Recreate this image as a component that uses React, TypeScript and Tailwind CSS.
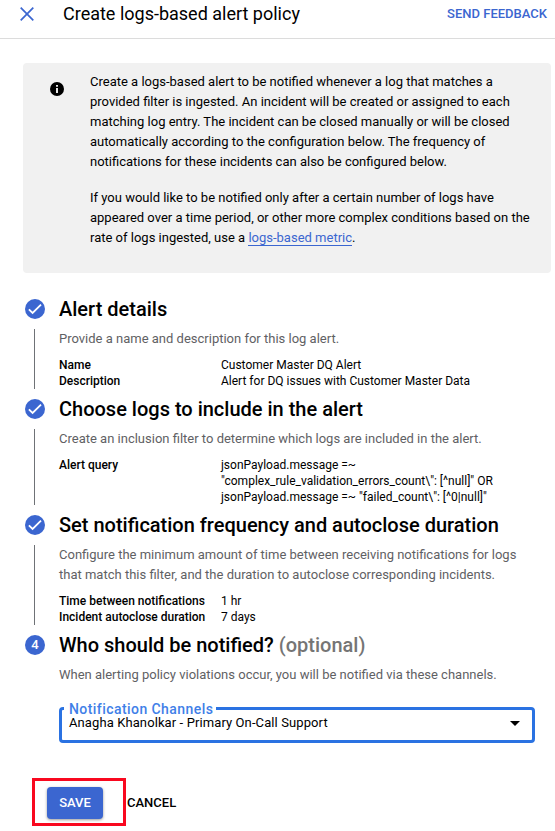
import type { ReactNode } from "react";

function CheckBadge() {
  return (
    <svg className="block size-5 shrink-0" viewBox="0 0 20 20">
      <circle cx="10" cy="10" r="10" fill="#3b66d0" />
      <path d="M3.9 10.3 7.6 14l8.4-8.4" fill="none" stroke="#fff" strokeWidth="1.8" />
    </svg>
  );
}

function NumberBadge({ value }: { value: number }) {
  return (
    <span className="flex size-5 shrink-0 items-center justify-center rounded-full bg-[#3b66d0] text-[13px] font-medium text-white">
      {value}
    </span>
  );
}

type StepProps = {
  badge: ReactNode;
  title: ReactNode;
  line?: boolean;
  children: ReactNode;
};

function Step({ badge, title, line = true, children }: StepProps) {
  return (
    <section className="mb-2.5 grid grid-cols-[20px_1fr] gap-x-3.5 gap-y-2.5">
      {badge}
      <h2 className="text-[20px] leading-5 font-medium whitespace-nowrap">{title}</h2>
      <div className="flex pl-[9px]">{line && <div className="w-px bg-[#6f7276]" />}</div>
      <div>{children}</div>
    </section>
  );
}

function Hint({ children }: { children: ReactNode }) {
  return <p className="text-[13px] leading-5 whitespace-nowrap text-[#5f6164]">{children}</p>;
}

function Details({ rows }: { rows: [string, ReactNode][] }) {
  return (
    <dl className="mt-2 grid grid-cols-[162px_1fr] text-xs leading-4 whitespace-nowrap">
      {rows.map(([name, value]) => (
        <div key={name} className="contents">
          <dt className="font-medium">{name}</dt>
          <dd>{value}</dd>
        </div>
      ))}
    </dl>
  );
}

export default function App() {
  return (
    <main className="h-[831px] w-[555px] overflow-hidden bg-white font-['Roboto',sans-serif] text-black">
      <header className="flex h-[39px] items-start border-b border-[#dcdcdc] pr-2 pl-5">
        <svg className="mt-[7px] block size-3.5" viewBox="0 0 14 14">
          <path d="M.7.7 13.3 13.3M13.3.7.7 13.3" stroke="#3b66d0" strokeWidth="1.7" />
        </svg>
        <h1 className="ml-[29px] text-lg leading-7">Create logs-based alert policy</h1>
        <button className="ml-auto text-[13px] leading-7 font-medium text-[#3b66d0]">SEND FEEDBACK</button>
      </header>

      <aside className="mt-6 ml-[23px] flex h-[210px] w-[528px] rounded-[4px] bg-[#f1f1f1] pt-[9px] pl-[27px]">
        <svg className="mt-[10px] block size-3.5 shrink-0" viewBox="0 0 14 14">
          <circle cx="7" cy="7" r="7" />
          <path d="M6.1 3h1.8v1.7H6.1zM6.1 6h1.8v5H6.1z" fill="#fff" />
        </svg>
        <div className="ml-[26px] text-[13px] leading-5 whitespace-nowrap">
          <p>
            Create a logs-based alert to be notified whenever a log that matches a<br />
            provided filter is ingested. An incident will be created or assigned to each<br />
            matching log entry. The incident can be closed manually or will be closed<br />
            automatically according to the configuration below. The frequency of<br />
            notifications for these incidents can also be configured below.
          </p>
          <p className="mt-4">
            If you would like to be notified only after a certain number of logs have<br />
            appeared over a time period, or other more complex conditions based on the<br />
            rate of logs ingested, use a{" "}
            <a className="border-b border-[#3b66d0] text-[#3b66d0]">logs-based metric</a>.
          </p>
        </div>
      </aside>

      <div className="mt-[26px] ml-[25px]">
        <Step badge={<CheckBadge />} title="Alert details">
          <Hint>Provide a name and description for this log alert.</Hint>
          <Details
            rows={[
              ["Name", "Customer Master DQ Alert"],
              ["Description", "Alert for DQ issues with Customer Master Data"],
            ]}
          />
        </Step>
        <Step badge={<CheckBadge />} title="Choose logs to include in the alert">
          <Hint>Create an inclusion filter to determine which logs are included in the alert.</Hint>
          <Details
            rows={[
              [
                "Alert query",
                <>
                  jsonPayload.message =~<br />
                  {'"complex_rule_validation_errors_count\\": [^null]" OR'}<br />
                  {'jsonPayload.message =~ "failed_count\\": [^0|null]"'}
                </>,
              ],
            ]}
          />
        </Step>
        <Step badge={<CheckBadge />} title="Set notification frequency and autoclose duration">
          <Hint>
            Configure the minimum amount of time between receiving notifications for logs<br />
            that match this filter, and the duration to autoclose corresponding incidents.
          </Hint>
          <Details
            rows={[
              ["Time between notifications", "1 hr"],
              ["Incident autoclose duration", "7 days"],
            ]}
          />
        </Step>
        <Step
          badge={<NumberBadge value={4} />}
          line={false}
          title={
            <>
              Who should be notified? <span className="text-[#757575]">(optional)</span>
            </>
          }
        >
          <Hint>When alerting policy violations occur, you will be notified via these channels.</Hint>
          <div className="relative mt-[22px] flex h-9 w-[476px] items-center justify-between rounded-[4px] border-3 border-[#2a72e2] pr-[12px] pb-1 pl-[7px]">
            <span className="absolute -top-[7px] left-[2px] bg-white pr-[3px] pl-[5px] text-sm leading-3 font-medium tracking-[0.43px] whitespace-nowrap text-[#3f7fe8]">
              Notification Channels
            </span>
            <span className="relative text-[13px] leading-4 tracking-[0.1px]">
              Anagha Khanolkar - Primary On-Call Support
            </span>
            <svg className="block h-[5px] w-2.5" viewBox="0 0 10 5">
              <path d="M0 0h10L5 5z" />
            </svg>
          </div>
        </Step>
      </div>

      <footer className="mt-[35px] ml-8 flex items-center">
        <div className="flex h-12 w-[94px] items-center border-3 border-[#f9081f] pl-3">
          <button className="mt-px h-8 w-14 rounded-[4px] bg-[#3b66d0] text-[13px] font-medium text-white shadow-[0_1px_3px_rgba(0,0,0,0.4)]">
            SAVE
          </button>
        </div>
        <button className="mt-px ml-px text-[13px] font-medium">CANCEL</button>
      </footer>
    </main>
  );
}
